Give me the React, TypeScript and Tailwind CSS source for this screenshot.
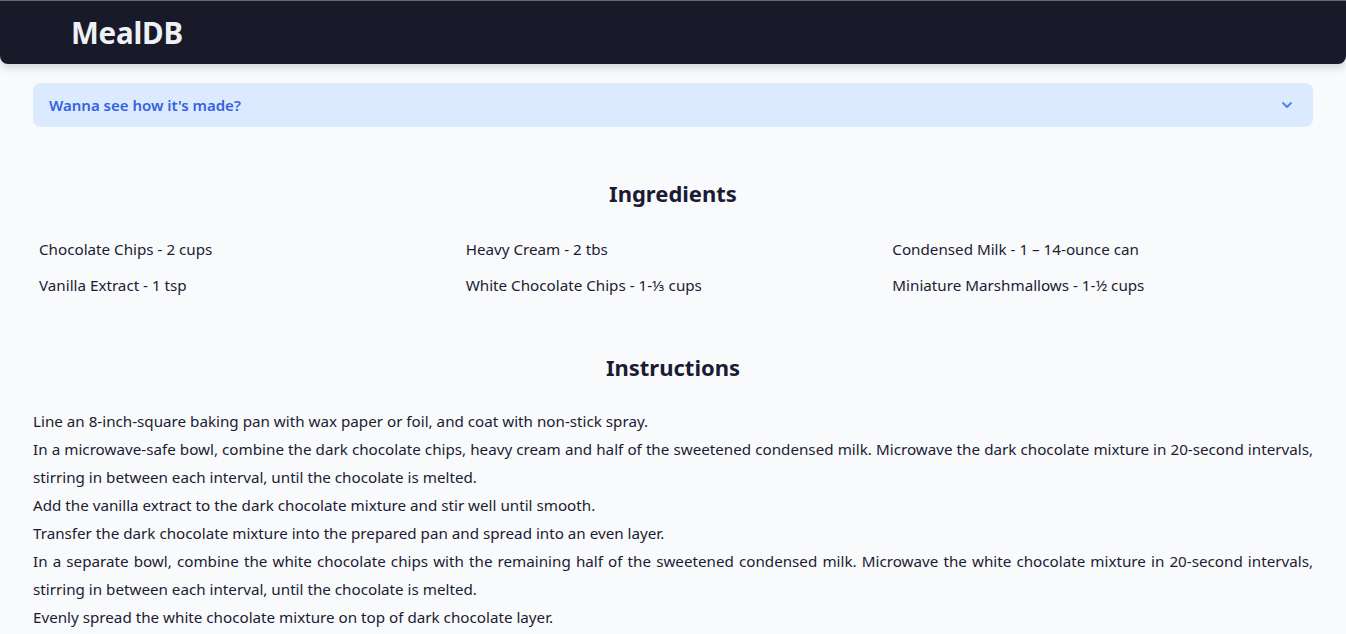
import { ChevronDown } from 'lucide-react'

const ingredients = [
  'Chocolate Chips - 2 cups',
  'Heavy Cream - 2 tbs',
  'Condensed Milk - 1 – 14-ounce can',
  'Vanilla Extract - 1 tsp',
  'White Chocolate Chips - 1-⅓ cups',
  'Miniature Marshmallows - 1-½ cups',
]

const instructions = [
  'Line an 8-inch-square baking pan with wax paper or foil, and coat with non-stick spray.',
  'In a microwave-safe bowl, combine the dark chocolate chips, heavy cream and half of the sweetened condensed milk. Microwave the dark chocolate mixture in 20-second intervals, stirring in between each interval, until the chocolate is melted.',
  'Add the vanilla extract to the dark chocolate mixture and stir well until smooth.',
  'Transfer the dark chocolate mixture into the prepared pan and spread into an even layer.',
  'In a separate bowl, combine the white chocolate chips with the remaining half of the sweetened condensed milk. Microwave the white chocolate mixture in 20-second intervals, stirring in between each interval, until the chocolate is melted.',
  'Evenly spread the white chocolate mixture on top of dark chocolate layer.',
]

export default function App() {
  return (
    <div className="min-h-screen bg-[#f8fafc] text-[#1c1b33] font-['Noto_Sans',sans-serif] border-t border-[#6b6b6b]">
      <header className="h-[63px] bg-[#181a2a] rounded-b-lg shadow-[0_4px_8px_rgba(0,0,0,0.15)] flex items-center px-[71px]">
        <h1 className="text-[29.5px] font-bold text-[#eef0f5] leading-none tracking-[-0.2px]">MealDB</h1>
      </header>

      <main className="px-[33px] pt-[19px]">
        <div className="h-[44px] bg-[#dbeafe] rounded-lg flex items-center justify-between pl-4 pr-[18px]">
          <span className="text-[15px] font-semibold text-[#3563e0]">Wanna see how it's made?</span>
          <ChevronDown className="h-4 w-4 text-[#4f86f0]" strokeWidth={3} />
        </div>

        <section className="mt-[50px]">
          <h2 className="text-center text-[22px] font-bold leading-8">Ingredients</h2>
          <ul className="grid grid-cols-3 gap-y-[12px] mt-[28px]">
            {ingredients.map((item) => (
              <li key={item} className="px-[6px] text-[15.2px] leading-6">
                {item}
              </li>
            ))}
          </ul>
        </section>

        <section className="mt-[54px]">
          <h2 className="text-center text-[22px] font-bold leading-8">Instructions</h2>
          <div className="mt-[24px] text-[15.2px] leading-[28px] text-justify">
            {instructions.map((step) => (
              <p key={step}>{step}</p>
            ))}
          </div>
        </section>
      </main>
    </div>
  )
}
